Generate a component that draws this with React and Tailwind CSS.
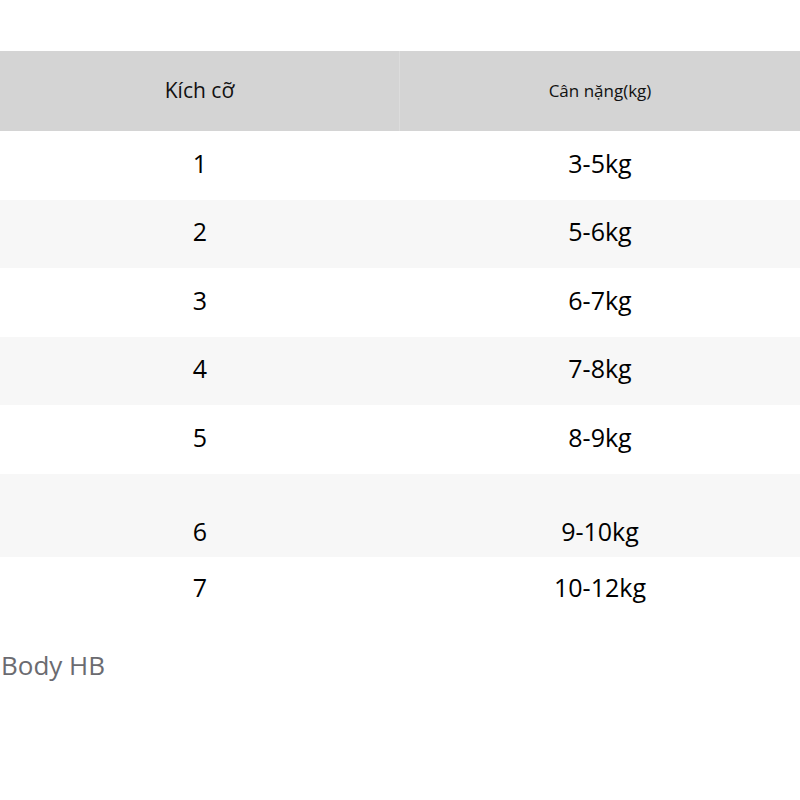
import React from 'react';

const rows = [
  { size: '1', weight: '3-5kg', h: 'h-[69px] pb-[4px]' },
  { size: '2', weight: '5-6kg', h: 'h-[68px] pb-[4px]' },
  { size: '3', weight: '6-7kg', h: 'h-[69px] pb-[4px]' },
  { size: '4', weight: '7-8kg', h: 'h-[68px] pb-[4px]' },
  { size: '5', weight: '8-9kg', h: 'h-[69px] pb-[4px]' },
  { size: '6', weight: '9-10kg', h: 'h-[83px] pt-[32px]' },
  { size: '7', weight: '10-12kg', h: 'h-[64px] pb-[2px]' },
];

export default function App() {
  return (
    <div className="w-[800px] h-[800px] bg-white pt-[51px]" style={{ fontFamily: '"Open Sans", "Noto Sans", sans-serif' }}>
      <div className="grid grid-cols-2 h-[80px] bg-[#d4d4d4] text-[#111]">
        <div className="flex items-center justify-center text-[21px] border-r border-[#dcdcdc]">
          Kích cỡ
        </div>
        <div className="flex items-center justify-center text-[17px]">
          Cân nặng(kg)
        </div>
      </div>

      {rows.map((row, i) => (
        <div
          key={row.size}
          className={`grid grid-cols-2 ${row.h} ${i % 2 === 1 ? 'bg-[#f7f7f7]' : 'bg-white'} text-[25px] text-black`}
        >
          <div className="flex items-center justify-center">{row.size}</div>
          <div className="flex items-center justify-center">{row.weight}</div>
        </div>
      ))}

      <p className="mt-[25px] pl-[1px] text-[26px] text-[#6b6b70]">Body HB</p>
    </div>
  );
}
